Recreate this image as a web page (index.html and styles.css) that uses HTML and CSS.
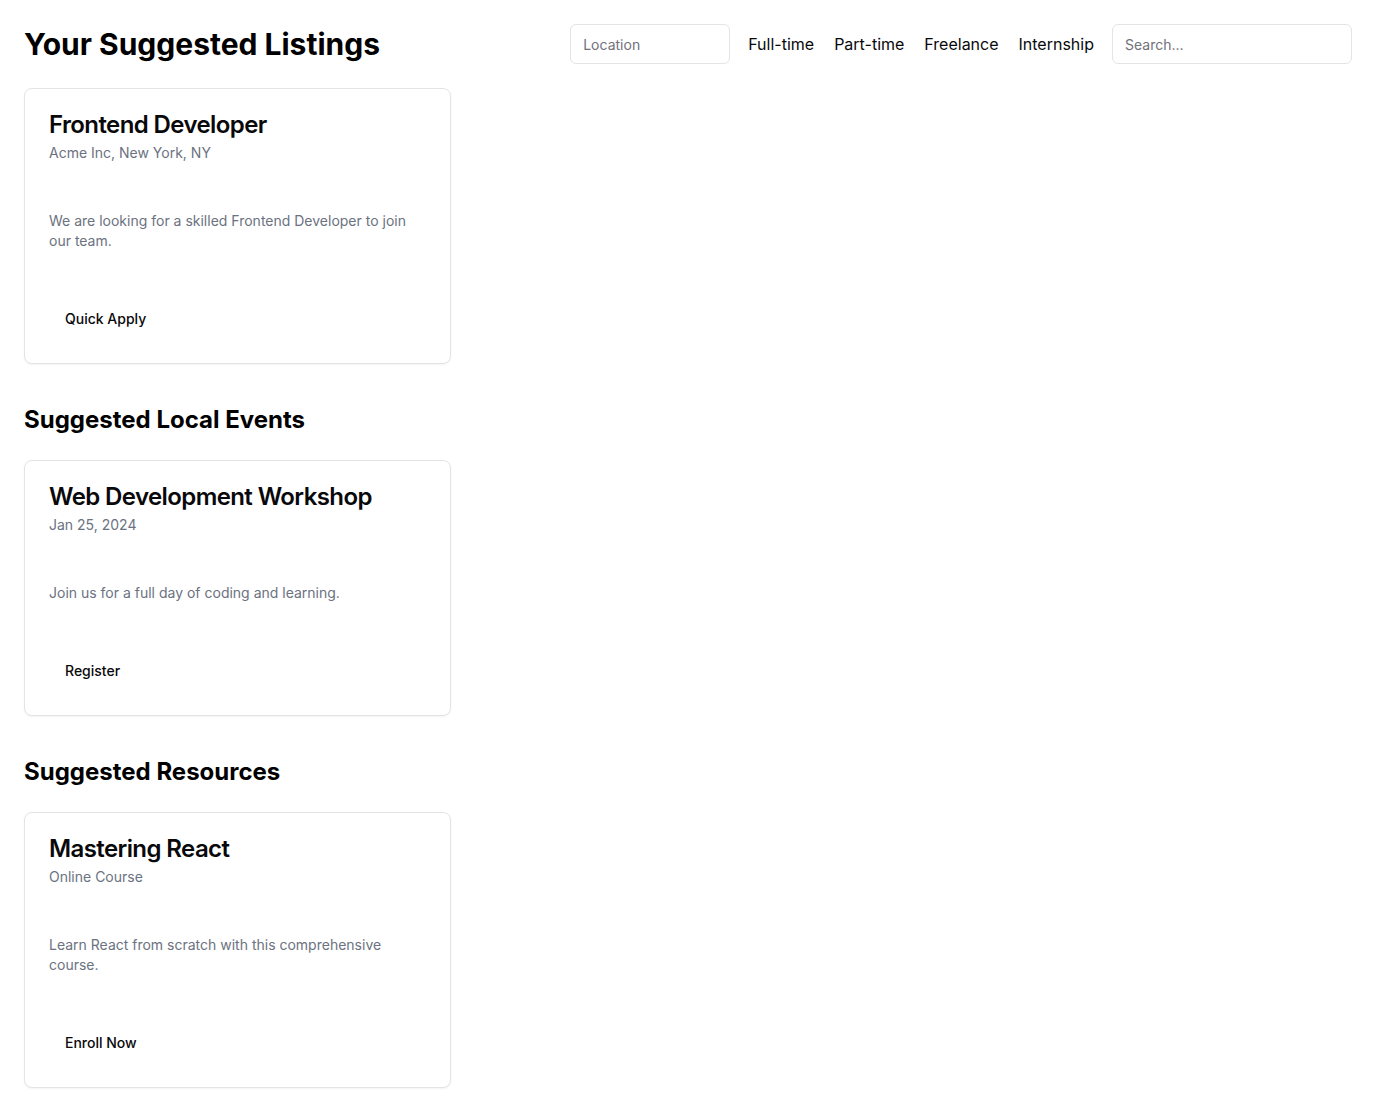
FILE: index.html
```html
<!DOCTYPE html>
<html lang="en">
<head>
<meta charset="utf-8">
<title>Your Suggested Listings</title>
<link rel="stylesheet" href="styles.css">
</head>
<body>
<main class="page">
  <header class="topbar">
    <h1 class="page-title">Your Suggested Listings</h1>
    <div class="filters">
      <input class="field field-location" type="text" placeholder="Location">
      <nav class="types">
        <a class="type-link" href="#">Full-time</a>
        <a class="type-link" href="#">Part-time</a>
        <a class="type-link" href="#">Freelance</a>
        <a class="type-link" href="#">Internship</a>
      </nav>
      <input class="field field-search" type="text" placeholder="Search...">
    </div>
  </header>

  <section class="section">
    <div class="grid">
      <div class="card">
        <div class="card-header">
          <h3 class="card-title">Frontend Developer</h3>
          <p class="card-sub">Acme Inc, New York, NY</p>
        </div>
        <div class="card-content">
          <p class="card-text">We are looking for a skilled Frontend Developer to join our team.</p>
        </div>
        <div class="card-footer">
          <button class="btn">Quick Apply</button>
        </div>
      </div>
    </div>
  </section>

  <section class="section">
    <h2 class="section-title">Suggested Local Events</h2>
    <div class="grid">
      <div class="card">
        <div class="card-header">
          <h3 class="card-title">Web Development Workshop</h3>
          <p class="card-sub">Jan 25, 2024</p>
        </div>
        <div class="card-content">
          <p class="card-text">Join us for a full day of coding and learning.</p>
        </div>
        <div class="card-footer">
          <button class="btn">Register</button>
        </div>
      </div>
    </div>
  </section>

  <section class="section">
    <h2 class="section-title">Suggested Resources</h2>
    <div class="grid">
      <div class="card">
        <div class="card-header">
          <h3 class="card-title">Mastering React</h3>
          <p class="card-sub">Online Course</p>
        </div>
        <div class="card-content">
          <p class="card-text">Learn React from scratch with this comprehensive course.</p>
        </div>
        <div class="card-footer">
          <button class="btn">Enroll Now</button>
        </div>
      </div>
    </div>
  </section>
</main>
</body>
</html>
```

FILE: styles.css
```css
* { box-sizing: border-box; }
html, body { margin: 0; padding: 0; background: #ffffff; }
body {
  font-family: Inter, "Noto Sans", "Liberation Sans", sans-serif;
  color: #09090b;
  -webkit-font-smoothing: antialiased;
}
.page { padding: 24px; }

.topbar {
  display: flex;
  align-items: center;
  justify-content: space-between;
  height: 40px;
  margin-bottom: 24px;
}
.page-title {
  margin: 0;
  font-size: 30px;
  line-height: 36px;
  font-weight: 700;
  letter-spacing: 0;
  color: #000;
}
.filters {
  display: flex;
  align-items: center;
  gap: 18px;
}
.field {
  height: 40px;
  border: 1px solid #e4e4e7;
  border-radius: 6px;
  padding: 0 12px;
  font-family: inherit;
  font-size: 14px;
  color: #09090b;
  background: #fff;
  outline: none;
}
.field::placeholder { color: #71717a; }
.field-location { width: 160px; }
.field-search { width: 240px; }
.types { display: flex; gap: 20px; }
.type-link {
  font-size: 16px;
  line-height: 24px;
  font-weight: 400;
  color: #09090b;
  text-decoration: none;
}

.section + .section { margin-top: 40px; }
.section-title {
  margin: 0 0 24px;
  font-size: 24px;
  line-height: 32px;
  font-weight: 700;
  color: #000;
}
.grid {
  display: grid;
  grid-template-columns: repeat(3, 1fr);
  gap: 24px;
}
.card {
  border: 1px solid #e4e4e7;
  border-radius: 8px;
  background: #fff;
  box-shadow: 0 1px 2px rgba(0, 0, 0, 0.05);
}
.card-header {
  padding: 24px;
  display: flex;
  flex-direction: column;
  gap: 6px;
}
.card-title {
  margin: 0;
  font-size: 24px;
  line-height: 24px;
  font-weight: 600;
  letter-spacing: -0.6px;
}
.card-sub {
  margin: 0;
  font-size: 14px;
  line-height: 20px;
  color: #6b7280;
}
.card-content { padding: 24px; }
.card-text {
  margin: 0;
  font-size: 14px;
  line-height: 20px;
  color: #6b7280;
}
.card-footer { padding: 24px; display: flex; align-items: center; }
.btn {
  height: 40px;
  padding: 0 16px;
  border: none;
  border-radius: 6px;
  background: transparent;
  font-family: inherit;
  font-size: 14px;
  line-height: 20px;
  font-weight: 500;
  color: #09090b;
  cursor: pointer;
}
```
